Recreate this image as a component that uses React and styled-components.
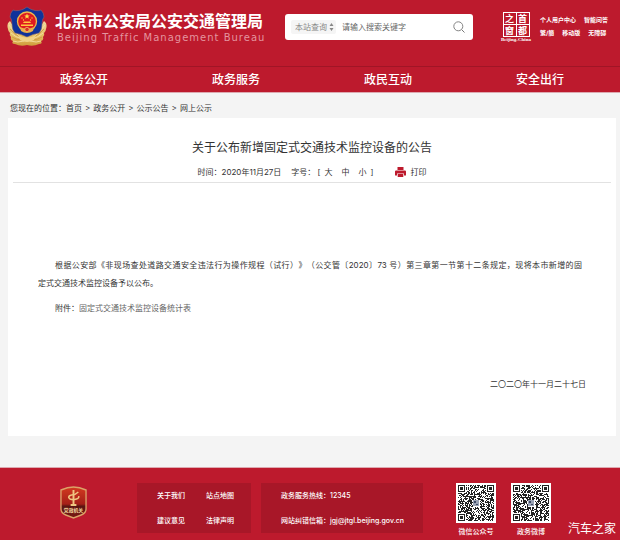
import React from "react";
import styled, { createGlobalStyle } from "styled-components";

const GlobalStyle = createGlobalStyle`
  * {
    box-sizing: border-box;
  }

  body {
    margin: 0;
    background: #f4f4f4;
    color: #333;
    font-family: Inter, "Noto Sans CJK SC", sans-serif;
    font-size: 8px;
    line-height: 18px;
    text-spacing-trim: space-all;
  }

  a {
    color: inherit;
    text-decoration: none;
  }

  button, input, select {
    font: inherit;
    color: inherit;
    border: none;
    background: none;
    padding: 0;
    margin: 0;
  }

  button {
    cursor: pointer;
  }

  h1, h2, p {
    margin: 0;
    font-weight: 400;
  }
`;

const Page = styled.div`
  display: flex;
  flex-direction: column;
  min-height: 100vh;
`;

const Header = styled.header`
  background: #bd1a2d;
  color: #fff;
  border-bottom: 1px solid #dda9b0;
`;

const TopBar = styled.div`
  display: flex;
  align-items: flex-start;
  height: 66px;
  padding: 6px 8px 0 6px;
`;

const Brand = styled.a`
  display: flex;
  flex: none;
  gap: 7px;
  width: 279px;
`;

const BrandText = styled.div`
  padding-top: 5px;
`;

const BrandName = styled.div`
  font-size: 16px;
  font-weight: 700;
  line-height: 20px;
  white-space: nowrap;
`;

const BrandSub = styled.div`
  padding-left: 2px;
  color: #e4949f;
  font-family: "DejaVu Sans", sans-serif;
  font-size: 10px;
  line-height: 14px;
  letter-spacing: 1px;
  white-space: nowrap;
`;

const Search = styled.form`
  display: flex;
  flex: 1;
  align-items: center;
  min-width: 0;
  height: 26px;
  margin-top: 8px;
  padding: 0 8px 0 6px;
  gap: 6px;
  background: #fff;
  border-radius: 3px;
`;

const Scope = styled.div`
  display: flex;
  flex: none;
  align-items: center;
  height: 14px;
  padding: 0 2px 0 4px;
  background: #f5f5f5;
  border-radius: 2px;
  color: #888;
`;

const ScopeSelect = styled.select`
  width: 34px;
  height: 14px;
  line-height: 14px;
  appearance: none;
`;

const SearchInput = styled.input`
  flex: 1;
  min-width: 0;
  height: 18px;
  color: #333;
  outline: none;

  &::placeholder {
    color: #666;
    opacity: 1;
  }
`;

const SearchButton = styled.button`
  display: flex;
`;

const Seal = styled.a`
  display: flex;
  flex: none;
  flex-direction: column;
  align-items: center;
  width: 30px;
  margin: 6px 9px 0 28px;
`;

const SealGrid = styled.span`
  display: grid;
  grid-template-columns: 12px 12px;
  grid-template-rows: 11px 11px;
  gap: 1px;
  padding: 1px;
  background: #fff;
`;

const SealCell = styled.span`
  background: #bd1a2d;
  font-size: 9px;
  font-weight: 700;
  line-height: 11px;
  text-align: center;
`;

const SealCaption = styled.span`
  font-family: "Liberation Serif", serif;
  font-size: 5px;
  font-weight: 700;
  line-height: 5px;
  white-space: nowrap;
`;

const QuickLinks = styled.nav`
  display: flex;
  flex: none;
  flex-direction: column;
  width: 72px;
  padding-top: 7px;
  font-size: 6px;
  font-weight: 700;
  line-height: 13px;
`;

const QuickRow = styled.div`
  display: flex;
  gap: 8px;
  white-space: nowrap;
`;

const MainNav = styled.nav`
  display: grid;
  grid-template-columns: repeat(4, 1fr);
  height: 26px;
  padding: 0 4px 0 8px;
  border-top: 1px solid #a01526;
`;

const NavItem = styled.a`
  font-size: 12px;
  font-weight: 500;
  line-height: 25px;
  text-align: center;
`;

const Breadcrumb = styled.nav`
  display: flex;
  padding: 6px 10px 1px;
`;

const Crumbs = styled.span`
  display: flex;
  gap: 3px;
`;

const Article = styled.main`
  flex: 1;
  margin: 0 4px 31px 8px;
  padding: 18px 5px 0;
  background: #fff;
`;

const Title = styled.h1`
  font-size: 12px;
  line-height: 24px;
  text-align: center;
`;

const Meta = styled.div`
  display: flex;
  justify-content: center;
  gap: 10px;
  padding: 3px 0 1px;
  border-bottom: 1px solid #e2e2e2;
`;

const SizePicker = styled.span`
  display: flex;
  gap: 4px;
`;

const SizeOptions = styled.span`
  display: flex;
  gap: 9px;
`;

const PrintButton = styled.button`
  display: flex;
  align-items: center;
  gap: 4px;
  margin-left: 12px;
`;

const ArticleBody = styled.div`
  padding: 73px 29px 43px 25px;
`;

const Paragraph = styled.p`
  margin-bottom: 7px;
  text-align: justify;
  text-indent: 17px;
`;

const NoWrap = styled.span`
  white-space: nowrap;
`;

const FileLink = styled.a`
  color: #666;
`;

const SignDate = styled.p`
  margin: 58px -4px 0 0;
  text-align: right;
`;

const Footer = styled.footer`
  position: relative;
  display: grid;
  grid-template-columns: 127px 114fr 162fr 187px;
  gap: 10px;
  height: 73px;
  padding-top: 15px;
  border-top: 1px solid #dda9b0;
  background: #bd1a2d;
  color: #fff;
  font-size: 7px;
  font-weight: 500;
`;

const PartyBadge = styled.a`
  padding: 3px 0 0 60px;
`;

const FooterBox = styled.div`
  display: grid;
  grid-template-columns: ${(props) => props.$columns || "1fr"};
  grid-auto-rows: 25px;
  height: 50px;
  padding: 0 0 0 20px;
  background: #a81728;
  line-height: 25px;
  white-space: nowrap;
`;

const Codes = styled.div`
  display: flex;
  gap: 15px;
  padding-left: 23px;
`;

const Code = styled.figure`
  width: 40px;
  margin: 0;
  text-align: center;

  figcaption {
    line-height: 18px;
    white-space: nowrap;
  }

  svg {
    display: block;
  }
`;

const Watermark = styled.span`
  position: absolute;
  right: 4px;
  bottom: 2px;
  font-size: 12px;
  font-weight: 400;
  line-height: 18px;
`;

const feathers = [0, 1, 2, 3, 4];

const PoliceEmblem = () => (
  <svg width="42" height="42" viewBox="0 0 42 42" aria-hidden="true">
    <defs>
      <linearGradient id="gold" x1="0" y1="0" x2="0" y2="1">
        <stop offset="0" stopColor="#efd9a0" />
        <stop offset="0.6" stopColor="#e6bf62" />
        <stop offset="1" stopColor="#cf9c3c" />
      </linearGradient>
    </defs>
    <path
      d="M4 15Q1 17 1.500 21Q2 25 4 27Q3 29 5 31Q4 34 7 35Q5 38 9 38Q15 41 21 39Q27 41 33 38Q37 38 35 35Q38 34 37 31Q39 29 38 27Q40 25 40.500 21Q41 17 38 15L30 28H12Z"
      fill="url(#gold)"
    />
    {feathers.map((i) => (
      <g key={i} stroke={i % 2 ? "#c9973f" : "#f8e3ac"} strokeWidth="0.8" fill="none">
        <path d={`M${3 + i} ${19 + i * 4}Q${7 + i} ${25 + i * 3} ${14 + i} ${31 + i}`} />
        <path d={`M${39 - i} ${19 + i * 4}Q${35 - i} ${25 + i * 3} ${28 - i} ${31 + i}`} />
      </g>
    ))}
    <path
      d="M21 1Q25 4 29 4.500Q33 5 35 4Q38 7 38 11Q36 13 36 18Q36 24 33 27Q27 28 21 31Q15 28 9 27Q6 24 6 18Q6 13 4 11Q4 7 7 4Q9 5 13 4.500Q17 4 21 1Z"
      fill="#10329a"
      stroke="#7b6a75"
      strokeWidth="0.6"
    />
    <circle cx="21" cy="15.500" r="9.500" fill="#df1a20" stroke="#eeb84e" strokeWidth="1.300" />
    <path d="M21 7.500l.8 2h2l-1.600 1.300.6 2-1.800-1.200-1.800 1.200.6-2-1.600-1.300h2z" fill="#ffe04a" />
    <g fill="#ffc93e">
      <circle cx="16" cy="12" r="0.7" />
      <circle cx="17.500" cy="14" r="0.7" />
      <circle cx="24.500" cy="14" r="0.7" />
      <circle cx="26" cy="12" r="0.7" />
      <path d="M18 15.500h6l1 1.500h-8zM15 18.500h12v1.500h-12z" />
    </g>
    <path d="M14 21q7 3 14 0l-1 4q-6 4-12 0z" fill="#e9b04a" />
    <circle cx="21" cy="23.500" r="2.200" fill="#d8322a" stroke="#f3d36c" strokeWidth="0.7" />
    <path d="M12 29Q21 34 30 29L28 34Q21 38 14 34Z" fill="#f0d287" />
  </svg>
);

const PartyShield = () => (
  <svg width="27" height="33" viewBox="0 0 28 33" preserveAspectRatio="none" aria-hidden="true">
    <defs>
      <linearGradient id="shield" x1="0" y1="0" x2="0" y2="1">
        <stop offset="0" stopColor="#d33a20" />
        <stop offset="0.55" stopColor="#a51f18" />
        <stop offset="0.62" stopColor="#5a1512" />
        <stop offset="1" stopColor="#7b1914" />
      </linearGradient>
    </defs>
    <path
      d="M14 1Q20 1 27 4V23Q27 27 22 29L14 32L6 29Q1 27 1 23V4Q8 1 14 1Z"
      fill="url(#shield)"
      stroke="#dba368"
      strokeWidth="1.400"
    />
    <g fill="none" stroke="#f0c682" strokeWidth="1.500">
      <path d="M14 4V19M11 19h6" strokeWidth="2" />
      <path d="M19 6Q16 9 12 9Q9 9.500 9 11.500Q10 14 15 13.500Q20 13 19.500 10" />
    </g>
    <text x="14" y="26" fill="#f5d7a0" fontSize="5" fontWeight="700" textAnchor="middle">
      党政机关
    </text>
  </svg>
);

const SearchIcon = () => (
  <svg width="12" height="12" viewBox="0 0 12 12" fill="none" stroke="#777">
    <circle cx="5.300" cy="5.300" r="4.500" strokeWidth="0.9" />
    <path d="M8.700 8.700L11.500 11.500" />
  </svg>
);

const ScopeArrows = () => (
  <svg width="5" height="8" viewBox="0 0 5 8" fill="#888" aria-hidden="true">
    <path d="M2.500 0L4.500 3H.5ZM2.500 8L4.500 5H.5Z" />
  </svg>
);

const PrinterIcon = () => (
  <svg width="11" height="10" viewBox="0 0 11 10" fill="#bd1a2d" aria-hidden="true">
    <path d="M2.500 0h6v3h-6z" />
    <path d="M1 3.500h9q1 0 1 1V8.500H9V6.500H2V8.500H0V4.500q0-1 1-1z" />
    <path d="M2.700 7h5.600v3H2.700z" />
  </svg>
);

const QR_SIZE = 36;

const finderAt = (x, y) => {
  const corners = [
    [0, 0],
    [QR_SIZE - 7, 0],
    [0, QR_SIZE - 7],
  ];
  for (const [cx, cy] of corners) {
    const dx = x - cx;
    const dy = y - cy;
    if (dx >= -1 && dx <= 7 && dy >= -1 && dy <= 7) {
      const ring = Math.max(Math.abs(dx - 3), Math.abs(dy - 3));
      return ring === 3 || ring <= 1;
    }
  }
  return null;
};

const qrPath = (seed) => {
  let state = seed;
  let d = "";
  for (let y = 0; y < QR_SIZE; y++) {
    for (let x = 0; x < QR_SIZE; x++) {
      state = (state * 1103515245 + 12345) % 2147483648;
      const finder = finderAt(x, y);
      const inLogo = Math.abs(x - 18) < 4 && Math.abs(y - 18) < 4;
      const dark = finder === null ? !inLogo && state / 2147483648 > 0.48 : finder;
      if (dark) d += `M${x + 2} ${y + 2}h1v1h-1z`;
    }
  }
  return d;
};

const QrCode = ({ seed, label }) => (
  <Code>
    <svg width="40" height="40" viewBox="0 0 40 40" shapeRendering="crispEdges">
      <rect width="40" height="40" fill="#fff" />
      <path d={qrPath(seed)} fill="#222" />
      <rect x="17" y="17" width="6" height="6" fill="#9aa3b5" />
      <path d="M18 18h2v2h-2zM20 21h2v1h-2z" fill="#3d4a66" />
    </svg>
    <figcaption>{label}</figcaption>
  </Code>
);

const navItems = ["政务公开", "政务服务", "政民互动", "安全出行"];
const crumbs = ["首页", "政务公开", "公示公告", "网上公示"];
const footerLinks = ["关于我们", "站点地图", "建议意见", "法律声明"];

const App = () => {
  return (
    <Page>
      <GlobalStyle />
      <Header>
        <TopBar>
          <Brand href="#">
            <PoliceEmblem />
            <BrandText>
              <BrandName>北京市公安局公安交通管理局</BrandName>
              <BrandSub>Beijing Traffic Management Bureau</BrandSub>
            </BrandText>
          </Brand>
          <Search>
            <Scope>
              <ScopeSelect aria-label="查询范围">
                <option>本站查询</option>
              </ScopeSelect>
              <ScopeArrows />
            </Scope>
            <SearchInput aria-label="搜索关键字" placeholder="请输入搜索关键字" />
            <SearchButton type="submit" aria-label="搜索">
              <SearchIcon />
            </SearchButton>
          </Search>
          <Seal href="#">
            <SealGrid>
              <SealCell>之</SealCell>
              <SealCell>首</SealCell>
              <SealCell>窗</SealCell>
              <SealCell>都</SealCell>
            </SealGrid>
            <SealCaption>Beijing-China</SealCaption>
          </Seal>
          <QuickLinks>
            <QuickRow>
              <a href="#">个人用户中心</a>
              <a href="#">智能问答</a>
            </QuickRow>
            <QuickRow>
              <a href="#">繁/簡</a>
              <a href="#">移动版</a>
              <a href="#">无障碍</a>
            </QuickRow>
          </QuickLinks>
        </TopBar>
        <MainNav>
          {navItems.map((item) => (
            <NavItem href="#" key={item}>
              {item}
            </NavItem>
          ))}
        </MainNav>
      </Header>

      <Breadcrumb>
        <span>您现在的位置：</span>
        <Crumbs>
          {crumbs.map((crumb, i) => (
            <React.Fragment key={crumb}>
              {i > 0 && <span>&gt;</span>}
              <a href="#">{crumb}</a>
            </React.Fragment>
          ))}
        </Crumbs>
      </Breadcrumb>

      <Article>
        <Title>关于公布新增固定式交通技术监控设备的公告</Title>
        <Meta>
          <span>时间：2020年11月27日</span>
          <SizePicker>
            <span>字号： [</span>
            <SizeOptions>
              <button type="button">大</button>
              <button type="button">中</button>
              <button type="button">小</button>
            </SizeOptions>
            <span>]</span>
          </SizePicker>
          <PrintButton type="button">
            <PrinterIcon />
            打印
          </PrintButton>
        </Meta>
        <ArticleBody>
          <Paragraph>
            根据公安部《非现场查处道路交通安全违法行为操作规程（试行）》（公交管〔2020〕73 号）第三章第一节第十二条规定，现将本市新增的固
            <NoWrap>定式交通技术监控设备予以公布。</NoWrap>
          </Paragraph>
          <Paragraph>
            附件：<FileLink href="#">固定式交通技术监控设备统计表</FileLink>
          </Paragraph>
          <SignDate>二〇二〇年十一月二十七日</SignDate>
        </ArticleBody>
      </Article>

      <Footer>
        <PartyBadge href="#">
          <PartyShield />
        </PartyBadge>
        <FooterBox $columns="49px 1fr">
          {footerLinks.map((link) => (
            <a href="#" key={link}>
              {link}
            </a>
          ))}
        </FooterBox>
        <FooterBox>
          <span>政务服务热线：12345</span>
          <span>网站纠错信箱：jgj@jtgl.beijing.gov.cn</span>
        </FooterBox>
        <Codes>
          <QrCode seed={20201} label="微信公众号" />
          <QrCode seed={71127} label="政务微博" />
        </Codes>
        <Watermark>汽车之家</Watermark>
      </Footer>
    </Page>
  );
};

export default App;
